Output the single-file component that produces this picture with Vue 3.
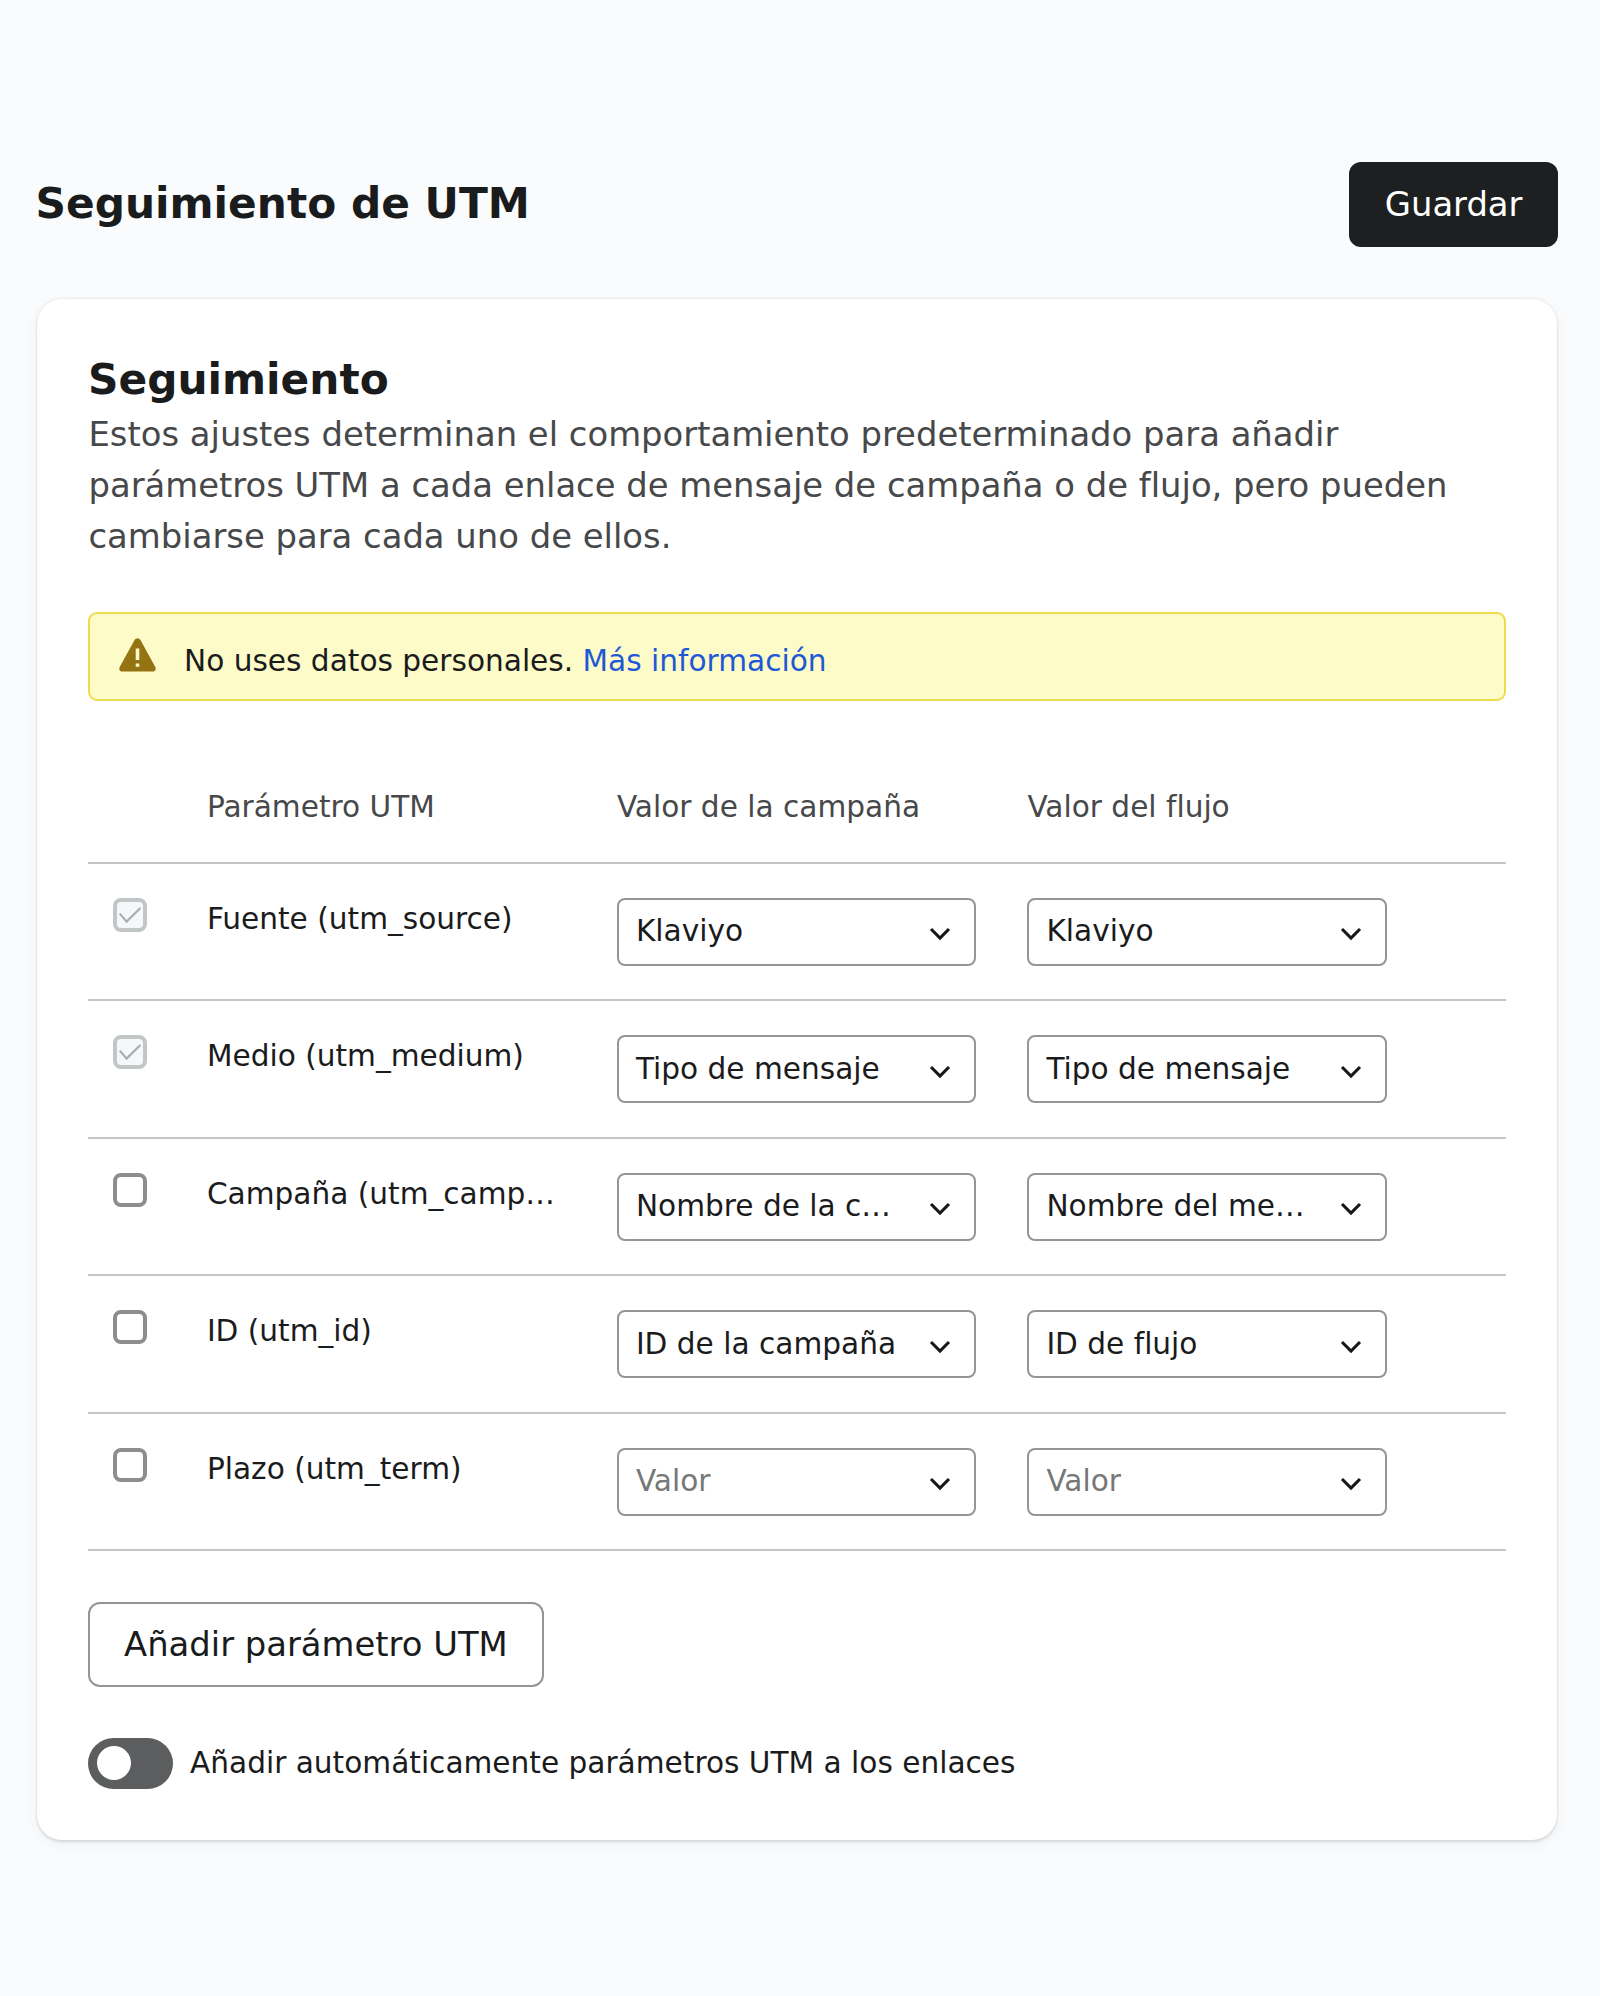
<template>
    <div class="page">
        <header class="page-header">
            <h1>Seguimiento de UTM</h1>
            <button class="btn btn-primary">Guardar</button>
        </header>

        <section class="card">
            <h2>Seguimiento</h2>
            <p class="description">Estos ajustes determinan el comportamiento predeterminado para añadir parámetros UTM a cada enlace de mensaje de campaña o de flujo, pero pueden cambiarse para cada uno de ellos.</p>

            <div class="alert">
                <svg class="alert-icon" viewBox="0 0 37 34">
                    <path d="M15.7 1.8a3.2 3.2 0 0 1 5.6 0l15 27.2c1.1 2.1-.1 4.6-2.5 4.6H3.2c-2.4 0-3.6-2.5-2.5-4.6z" fill="#937312" />
                    <path d="M18.5 10.5v11.5M18.5 25.4v3.4" stroke="#fdfbcb" stroke-width="3.6" />
                </svg>
                <span class="alert-text">No uses datos personales. <a href="#" @click.prevent>Más información</a></span>
            </div>

            <div class="table">
                <div class="row row-head">
                    <span></span>
                    <span>Parámetro UTM</span>
                    <span>Valor de la campaña</span>
                    <span>Valor del flujo</span>
                </div>
                <div class="row" v-for="param in params" :key="param.label">
                    <div class="check" :class="{ disabled: param.locked }" @click="toggleParam(param)">
                        <svg v-if="param.checked" viewBox="0 0 34 34">
                            <path d="M6.8 15.6l6.8 8L27.4 10" fill="none" stroke="currentColor" stroke-width="2.2" />
                        </svg>
                    </div>
                    <span class="label">{{ param.label }}</span>
                    <div class="select" v-for="(value, index) in [param.campaign, param.flow]" :key="index">
                        <span :class="{ placeholder: !value }">{{ value || 'Valor' }}</span>
                        <svg class="chevron" viewBox="0 0 22 14">
                            <path d="M2 2l9 9 9-9" fill="none" stroke="#161818" stroke-width="3.1" />
                        </svg>
                    </div>
                </div>
            </div>

            <button class="btn btn-outline">Añadir parámetro UTM</button>

            <div class="toggle-row">
                <div class="toggle" :class="{ on: autoAdd }" @click="autoAdd = !autoAdd">
                    <div class="knob"></div>
                </div>
                <span>Añadir automáticamente parámetros UTM a los enlaces</span>
            </div>
        </section>
    </div>
</template>

<script setup>
import { ref } from 'vue';

const autoAdd = ref(false);

const params = ref([
    { label: 'Fuente (utm_source)', campaign: 'Klaviyo', flow: 'Klaviyo', checked: true, locked: true },
    { label: 'Medio (utm_medium)', campaign: 'Tipo de mensaje', flow: 'Tipo de mensaje', checked: true, locked: true },
    { label: 'Campaña (utm_camp…', campaign: 'Nombre de la c…', flow: 'Nombre del me…', checked: false, locked: false },
    { label: 'ID (utm_id)', campaign: 'ID de la campaña', flow: 'ID de flujo', checked: false, locked: false },
    { label: 'Plazo (utm_term)', campaign: '', flow: '', checked: false, locked: false },
]);

const toggleParam = (param) => {
    if (param.locked) return;
    param.checked = !param.checked;
};
</script>

<style>
body {
    margin: 0;
    background: #fafbfc;
}
</style>

<style scoped>
.page {
    box-sizing: border-box;
    min-height: 1996px;
    padding: 162px 42px 0 35.5px;
    font-family: "DejaVu Sans", sans-serif;
    font-size: 29.6px;
    line-height: 42.5px;
    font-variant-ligatures: none;
    color: #1a1b1c;
}

.page-header {
    display: flex;
    justify-content: space-between;
    align-items: center;
    margin-bottom: 52px;
}

h1,
h2 {
    margin: 0;
    font-size: 42.3px;
    line-height: 59.5px;
    font-weight: bold;
}

h1 {
    padding-bottom: 2px;
}

.btn {
    box-sizing: border-box;
    height: 85px;
    padding: 0 33.5px 1px;
    border: 2px solid #949595;
    border-radius: 12px;
    font-family: inherit;
    font-size: 33.82px;
    color: #1a1b1c;
    background: #fff;
    cursor: pointer;
}

.btn-primary {
    border-color: #1d1f20;
    background: #1d1f20;
    color: #fff;
}

.card {
    box-sizing: border-box;
    width: 1520px;
    margin-left: 1.5px;
    padding: 51px;
    border-radius: 25px;
    background: #fff;
    box-shadow: 0 0 2px 1px rgba(0, 0, 0, .06), 0 3px 3px rgba(0, 0, 0, .07), 0 4px 18px rgba(0, 0, 0, .04);
}

.description {
    margin: -1px 0 50.5px;
    padding-left: .5px;
    font-size: 33.84px;
    line-height: 51px;
    color: #474849;
}

.alert {
    display: flex;
    align-items: center;
    box-sizing: border-box;
    height: 89px;
    padding-left: 28.5px;
    border: 2px solid #eddc4d;
    border-radius: 9px;
    background: #fdfbc8;
}

.alert-icon {
    width: 37px;
    height: 34px;
    margin: 0 28.5px 3px 0;
}

.alert-text {
    padding-top: 9px;
}

.alert a {
    color: #1f58d6;
    text-decoration: none;
}

.table {
    margin-top: 50.5px;
}

.row {
    display: grid;
    grid-template-columns: 93.5px 410px 410.5px 359.5px;
    align-items: start;
    box-sizing: border-box;
    height: 137.5px;
    padding: 34px 0 0 25.4px;
    border-bottom: 2px solid #c4c5c5;
}

.row-head {
    height: 112px;
    color: #474849;
}

.row > span {
    white-space: nowrap;
}

.check {
    box-sizing: border-box;
    width: 34px;
    height: 34px;
    border: 4px solid #8c8d8d;
    border-radius: 8px;
    background: #fff;
}

.check.disabled {
    border-color: #c3c6c7;
    background: #f5f8fa;
    color: #a9adae;
}

.check svg {
    display: block;
    width: 34px;
    height: 34px;
    margin: -4px;
}

.select {
    display: flex;
    align-items: center;
    justify-content: space-between;
    box-sizing: border-box;
    width: 359.5px;
    height: 68px;
    padding: 0 23px 0 17px;
    border: 2px solid #949595;
    border-radius: 8px;
    background: #fff;
}

.placeholder {
    color: #767777;
}

.chevron {
    width: 22px;
    height: 14px;
    margin-top: 5px;
}

.btn-outline {
    display: block;
    margin: 51px 0;
    padding: 0 34px;
    font-variant-ligatures: inherit;
}

.toggle-row {
    display: flex;
    align-items: center;
    gap: 17px;
}

.toggle {
    box-sizing: border-box;
    width: 85px;
    height: 51px;
    padding: 8px 8.5px;
    border-radius: 26px;
    background: #5c5d5e;
}

.toggle.on {
    padding-left: 42.5px;
}

.knob {
    width: 34px;
    height: 34px;
    border-radius: 50%;
    background: #fff;
}
</style>
